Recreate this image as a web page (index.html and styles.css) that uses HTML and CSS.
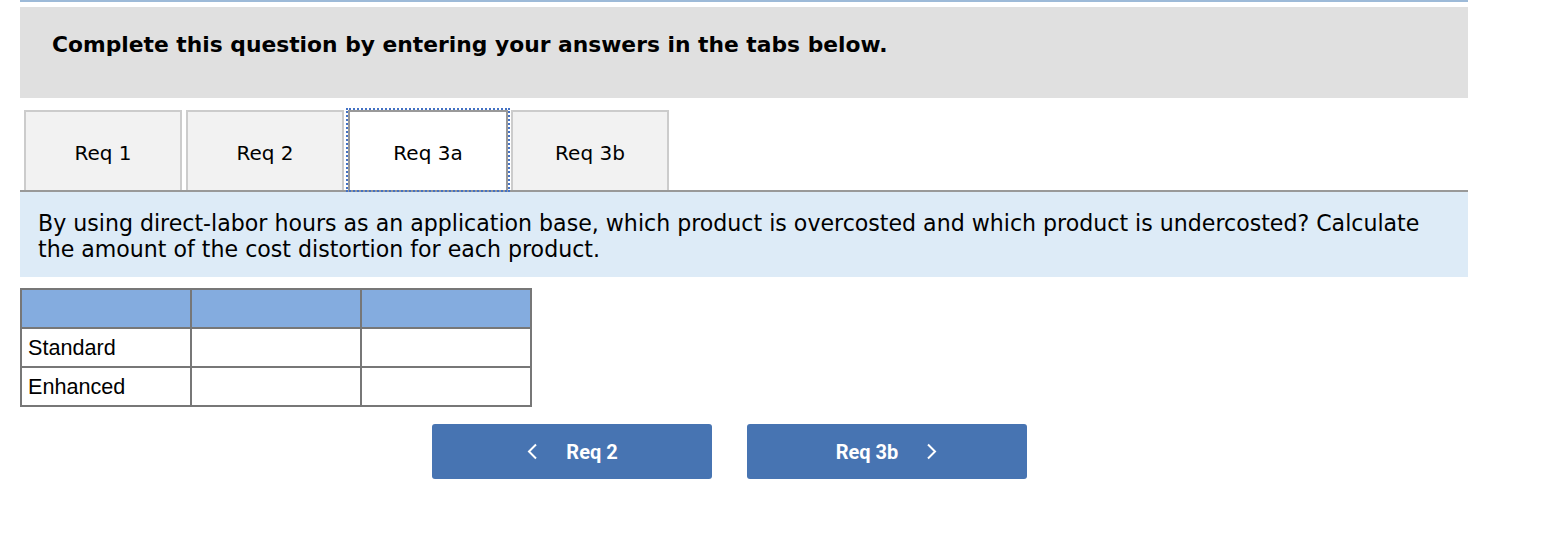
FILE: index.html
```html
<!DOCTYPE html>
<html>
<head>
<meta charset="utf-8">
<link rel="stylesheet" href="styles.css">
</head>
<body>
<div class="page">
  <div class="topline"></div>
  <div class="instructions">Complete this question by entering your answers in the tabs below.</div>
  <div class="tabs">
    <div class="tab">Req 1</div>
    <div class="tab">Req 2</div>
    <div class="tab active">Req 3a</div>
    <div class="tab">Req 3b</div>
  </div>
  <div class="prompt">By using direct-labor hours as an application base, which product is overcosted and which product is undercosted? Calculate the amount of the cost distortion for each product.</div>
  <table class="grid">
    <tr class="head"><td></td><td></td><td></td></tr>
    <tr><td>Standard</td><td></td><td></td></tr>
    <tr><td>Enhanced</td><td></td><td></td></tr>
  </table>
  <div class="nav">
    <button class="navbtn"><svg class="chev" width="12" height="17" viewBox="0 0 12 17"><path d="M10 1.5 L3 8.5 L10 15.5" fill="none" stroke="#fff" stroke-width="2"/></svg><span>Req 2</span></button>
    <button class="navbtn"><span>Req 3b</span><svg class="chev" width="12" height="17" viewBox="0 0 12 17"><path d="M2 1.5 L9 8.5 L2 15.5" fill="none" stroke="#fff" stroke-width="2"/></svg></button>
  </div>
</div>
</body>
</html>
```
FILE: styles.css
```css
html, body { margin: 0; padding: 0; background: #fff; }
.page { width: 1448px; margin-left: 20px; font-family: "DejaVu Sans", Verdana, sans-serif; color: #000; }
.topline { height: 2px; background: #9dbad8; margin-bottom: 5px; }
.instructions { height: 91px; box-sizing: border-box; background: #e0e0e0; padding: 25px 0 0 32px; font-weight: bold; font-size: 21.8px; line-height: 26px; }
.tabs { display: flex; margin-top: 12px; padding-left: 4px; border-bottom: 2px solid #999; height: 80px; box-sizing: content-box; }
.tab { width: 158px; height: 80px; box-sizing: border-box; background: #f2f2f2; border: 2px solid #ccc; border-bottom: none; display: flex; align-items: center; justify-content: center; font-size: 20px; padding-top: 4px; margin-right: 4px; }
.tab.active { background: #fff; width: 160px; border: 2px solid #999; border-bottom: none; outline: 2px dotted #4472c4; outline-offset: 0; margin-right: 3px; margin-left: 0; }
.prompt { background: #ddebf7; height: 85px; box-sizing: border-box; padding: 18px 18px 0 18px; font-size: 22.1px; line-height: 26px; }
.grid { margin-top: 11px; border-collapse: collapse; font-family: "Liberation Sans", Arial, sans-serif; font-size: 21.6px; }
.grid td { border: 2px solid #777; width: 170px; height: 39px; padding: 0 6px; box-sizing: border-box; }
.grid tr.head td { background: #84acdf; }
.nav { display: flex; gap: 35px; margin-left: 412px; margin-top: 17px; }
.navbtn { width: 280px; height: 55px; background: #4774b2; border: none; border-radius: 3px; color: #fff; font-family: Roboto, sans-serif; font-weight: bold; font-size: 20px; display: flex; align-items: center; justify-content: center; gap: 28px; padding: 0; }
.chev { display: block; }
```
